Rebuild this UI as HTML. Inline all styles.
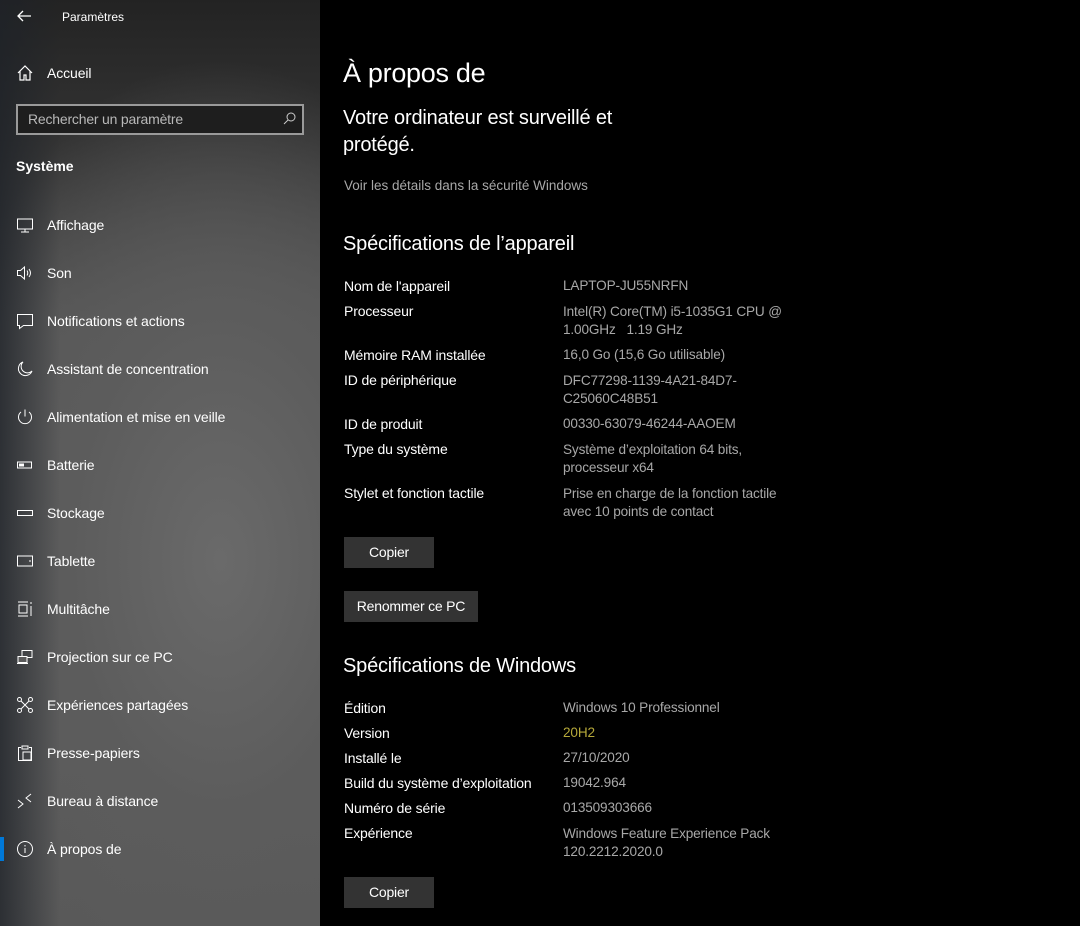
<!DOCTYPE html>
<html><head><meta charset="utf-8"><style>
*{margin:0;padding:0;box-sizing:border-box}
body{width:1080px;height:926px;overflow:hidden;background:#000;font-family:"Liberation Sans",sans-serif;color:#fff;position:relative}
#side{position:absolute;left:0;top:0;width:320px;height:926px;
background:radial-gradient(ellipse 300px 500px at 220px 560px,#6a6a6a 0%,#5c5c5c 50%,rgba(90,90,90,0) 100%),linear-gradient(180deg,#232323 0%,#333 15%,#555 35%,#5e5e5e 60%,#585858 100%)}
#side:before{content:"";position:absolute;left:0;top:0;width:60px;height:926px;background:linear-gradient(90deg,rgba(30,34,40,.75),rgba(30,34,40,0))}
.t{position:absolute;white-space:nowrap;line-height:18px}
.s{font-size:14px}
.it{font-size:14px;left:47px;letter-spacing:-0.1px}
.ic{position:absolute;left:16px;width:18px;height:18px}
.l{font-size:14px;left:344px;color:#fff;letter-spacing:-0.15px}
.v{font-size:13.6px;left:563px;color:#a8a8a8;letter-spacing:-0.15px}
.btn{position:absolute;background:#333;color:#fff;font-size:14px;text-align:center;line-height:31px;height:31px;letter-spacing:-0.2px}
</style></head><body>
<div id="side">
<svg class="ic" style="top:8px;width:16px;height:16px" viewBox="0 0 16 16"><path d="M15 8H2M7 3L2 8l5 5" stroke="#fff" fill="none" stroke-width="1.3"/></svg>
<div class="t" style="left:62px;top:8px;font-size:12px">Paramètres</div>
<svg class="ic" style="top:64px" viewBox="0 0 18 18"><path d="M2 9L9 2l7 7M4 7v9h4v-5h2v5h4V7" stroke="#fff" fill="none" stroke-width="1.2"/></svg>
<div class="t it" style="top:64px">Accueil</div>
<div style="position:absolute;left:16px;top:104px;width:288px;height:31px;border:2px solid #9a9a9a;background:#1e1e1e"></div>
<div class="t s" style="left:28px;top:110px;color:#b8b8b8;letter-spacing:-0.2px">Rechercher un paramètre</div>
<svg class="ic" style="left:282px;top:111px;width:15px;height:15px" viewBox="0 0 15 15"><circle cx="9" cy="6" r="4" stroke="#ccc" fill="none"/><path d="M6 9l-4 4" stroke="#ccc"/></svg>
<div class="t s" style="left:16px;top:157px;font-weight:bold">Système</div>
<svg class="ic" style="top:216px" viewBox="0 0 18 18"><rect x="1.5" y="3" width="15" height="10" stroke="#fff" fill="none"/><path d="M9 13v3M5 16h8" stroke="#fff"/></svg>
<div class="t it" style="top:216px">Affichage</div>
<svg class="ic" style="top:264px" viewBox="0 0 18 18"><path d="M1.5 6.5h3l4-3.5v12l-4-3.5h-3z M11 6.5q1.5 2.5 0 5M13 5q3 4 0 8" stroke="#fff" fill="none"/></svg>
<div class="t it" style="top:264px">Son</div>
<svg class="ic" style="top:312px" viewBox="0 0 18 18"><path d="M1.5 2.5h15v11h-9l-4 3v-3h-2z" stroke="#fff" fill="none"/></svg>
<div class="t it" style="top:312px">Notifications et actions</div>
<svg class="ic" style="top:360px" viewBox="0 0 18 18"><path d="M7 2a7 7 0 1 0 9 9A6 6 0 0 1 7 2z" stroke="#fff" fill="none"/></svg>
<div class="t it" style="top:360px">Assistant de concentration</div>
<svg class="ic" style="top:408px" viewBox="0 0 18 18"><path d="M9 1.5v7M5 4a6.5 6.5 0 1 0 8 0" stroke="#fff" fill="none"/></svg>
<div class="t it" style="top:408px">Alimentation et mise en veille</div>
<svg class="ic" style="top:456px" viewBox="0 0 18 18"><rect x="1.5" y="6" width="14" height="6" stroke="#fff" fill="none"/><rect x="3" y="7.5" width="5" height="3" fill="#fff"/></svg>
<div class="t it" style="top:456px">Batterie</div>
<svg class="ic" style="top:504px" viewBox="0 0 18 18"><rect x="1.5" y="6.5" width="15" height="5" stroke="#fff" fill="none"/></svg>
<div class="t it" style="top:504px">Stockage</div>
<svg class="ic" style="top:552px" viewBox="0 0 18 18"><rect x="1.5" y="4" width="15" height="10" stroke="#fff" fill="none"/><path d="M14 8v2" stroke="#fff"/></svg>
<div class="t it" style="top:552px">Tablette</div>
<svg class="ic" style="top:600px" viewBox="0 0 18 18"><path d="M2 2h10M2 16h10M3 5h8v8H3zM15 2v2M15 6v10" stroke="#fff" fill="none"/></svg>
<div class="t it" style="top:600px">Multitâche</div>
<svg class="ic" style="top:648px" viewBox="0 0 18 18"><rect x="6" y="2.5" width="10" height="7" stroke="#fff" fill="none"/><rect x="2" y="8.5" width="9" height="6" stroke="#fff" fill="#5a5a5a"/><path d="M1 15.5h11" stroke="#fff"/></svg>
<div class="t it" style="top:648px">Projection sur ce PC</div>
<svg class="ic" style="top:696px" viewBox="0 0 18 18"><circle cx="3.5" cy="3.5" r="2" stroke="#fff" fill="none"/><circle cx="14.5" cy="3.5" r="2" stroke="#fff" fill="none"/><circle cx="3.5" cy="14.5" r="2" stroke="#fff" fill="none"/><circle cx="14.5" cy="14.5" r="2" stroke="#fff" fill="none"/><path d="M5 5l8 8M13 5l-8 8" stroke="#fff"/></svg>
<div class="t it" style="top:696px">Expériences partagées</div>
<svg class="ic" style="top:744px" viewBox="0 0 18 18"><path d="M5 3.5H2.5v13h13v-13H13M6 2h6v3H6zM7 8h8v8H7z" stroke="#fff" fill="none"/></svg>
<div class="t it" style="top:744px">Presse-papiers</div>
<svg class="ic" style="top:792px" viewBox="0 0 18 18"><path d="M2 8l5 4-5 4M15 2l-5 4 5 4" stroke="#fff" fill="none"/></svg>
<div class="t it" style="top:792px">Bureau à distance</div>
<div style="position:absolute;left:0;top:837px;width:4px;height:24px;background:#0078d7"></div>
<svg class="ic" style="top:840px" viewBox="0 0 18 18"><circle cx="9" cy="9" r="7.5" stroke="#fff" fill="none"/><path d="M9 8v5M9 5v1.5" stroke="#fff"/></svg>
<div class="t it" style="top:840px">À propos de</div>
</div>

<div class="t" style="left:343px;top:56px;font-size:27px;line-height:34px;letter-spacing:-0.3px">À propos de</div>
<div class="t" style="left:343px;top:105px;font-size:20px;line-height:27px;letter-spacing:-0.2px">Votre ordinateur est surveillé et<br>protégé.</div>
<div class="t s" style="left:344px;top:177px;color:#a8a8a8;font-size:13.5px">Voir les détails dans la sécurité Windows</div>
<div class="t" style="left:343px;top:231px;font-size:20px;line-height:26px;letter-spacing:-0.2px">Spécifications de l’appareil</div>

<div class="t l" style="top:277px">Nom de l'appareil</div><div class="t v" style="top:277px">LAPTOP-JU55NRFN</div>
<div class="t l" style="top:302px">Processeur</div><div class="t v" style="top:303px">Intel(R) Core(TM) i5-1035G1 CPU @<br>1.00GHz &nbsp; 1.19 GHz</div>
<div class="t l" style="top:346px">Mémoire RAM installée</div><div class="t v" style="top:346px">16,0 Go (15,6 Go utilisable)</div>
<div class="t l" style="top:371px">ID de périphérique</div><div class="t v" style="top:372px">DFC77298-1139-4A21-84D7-<br>C25060C48B51</div>
<div class="t l" style="top:415px">ID de produit</div><div class="t v" style="top:415px">00330-63079-46244-AAOEM</div>
<div class="t l" style="top:440px">Type du système</div><div class="t v" style="top:441px">Système d’exploitation 64 bits,<br>processeur x64</div>
<div class="t l" style="top:484px">Stylet et fonction tactile</div><div class="t v" style="top:485px">Prise en charge de la fonction tactile<br>avec 10 points de contact</div>
<div class="btn" style="left:344px;top:537px;width:90px">Copier</div>
<div class="btn" style="left:344px;top:591px;width:134px">Renommer ce PC</div>

<div class="t" style="left:343px;top:653px;font-size:20px;line-height:26px;letter-spacing:-0.2px">Spécifications de Windows</div>
<div class="t l" style="top:699px">Édition</div><div class="t v" style="top:699px">Windows 10 Professionnel</div>
<div class="t l" style="top:724px">Version</div><div class="t v" style="top:724px;color:#b5a83a">20H2</div>
<div class="t l" style="top:749px">Installé le</div><div class="t v" style="top:749px">27/10/2020</div>
<div class="t l" style="top:774px">Build du système d’exploitation</div><div class="t v" style="top:774px">19042.964</div>
<div class="t l" style="top:799px">Numéro de série</div><div class="t v" style="top:799px">013509303666</div>
<div class="t l" style="top:824px">Expérience</div><div class="t v" style="top:825px">Windows Feature Experience Pack<br>120.2212.2020.0</div>
<div class="btn" style="left:344px;top:877px;width:90px">Copier</div>
</body></html>
